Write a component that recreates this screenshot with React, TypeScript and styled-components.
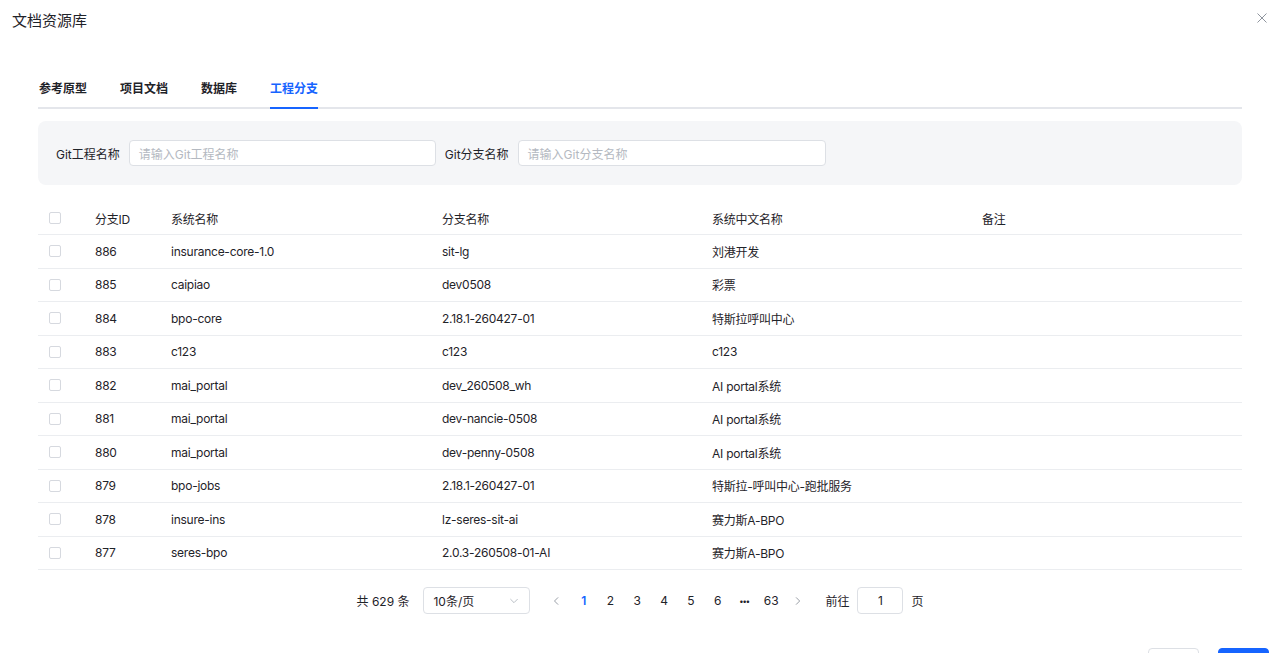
import styled, { createGlobalStyle } from "styled-components";

const GlobalStyle = createGlobalStyle`
  html, body {
    margin: 0;
    padding: 0;
    background: #fff;
    overflow: hidden;
  }
  body {
    font-family: Inter, "Noto Sans CJK SC", sans-serif;
    color: #1f2329;
  }
  * { box-sizing: border-box; }
`;

const Dialog = styled.div`
  width: 1280px;
  height: 653px;
  overflow: hidden;
  display: flex;
  flex-direction: column;

  & > * {
    flex-shrink: 0;
  }
`;

const Header = styled.header`
  display: flex;
  justify-content: space-between;
  align-items: flex-start;
  padding: 10px 12px 0 12px;
  height: 81px;
`;

const Title = styled.h2`
  margin: 0;
  font-size: 15px;
  font-weight: 400;
  line-height: 22px;
  color: #1f2329;
`;

const Close = styled.button`
  border: 0;
  background: none;
  padding: 0;
  width: 12px;
  height: 12px;
  margin-top: 2px;
  color: #8f959e;
  display: flex;
`;

const Body = styled.div`
  padding: 0 38px;
  display: flex;
  flex-direction: column;
`;

const Tabs = styled.nav`
  display: flex;
  gap: 33px;
  border-bottom: 2px solid #e4e6eb;
  padding-left: 1px;
  margin-bottom: 12px;
`;

const Tab = styled.div<{ $active?: boolean }>`
  font-size: 12px;
  font-weight: 600;
  line-height: 16px;
  padding-bottom: 10px;
  margin-bottom: -2px;
  color: ${(p) => (p.$active ? "#1664ff" : "#1f2329")};
  border-bottom: 2px solid ${(p) => (p.$active ? "#1664ff" : "transparent")};
`;

const Filter = styled.div`
  background: #f5f6f8;
  border-radius: 8px;
  height: 64px;
  padding: 0 18px;
  display: flex;
  align-items: center;
  gap: 9px;
`;

const FieldLabel = styled.label`
  font-size: 12px;
  color: #1f2329;
  white-space: nowrap;
`;

const TextInput = styled.div<{ $w: number }>`
  width: ${(p) => p.$w}px;
  height: 26px;
  background: #fff;
  border: 1px solid #dde0e5;
  border-radius: 4px;
  font-size: 12px;
  color: #b4b9c1;
  display: flex;
  align-items: center;
  padding: 0 9px;
`;

const Table = styled.div`
  margin-top: 17px;
  display: flex;
  flex-direction: column;
  letter-spacing: -0.25px;
`;

const cols = "57px 76px 271px 270px 270px 1fr";

const HeadRow = styled.div`
  display: grid;
  grid-template-columns: ${cols};
  align-items: center;
  height: 33px;
  border-bottom: 1px solid #ebedf0;
  font-size: 12px;
  color: #1f2329;
`;

const Row = styled.div`
  display: grid;
  grid-template-columns: ${cols};
  align-items: center;
  height: 33.5px;
  border-bottom: 1px solid #ebedf0;
  font-size: 12px;
  color: #1f2329;
`;

const Cell = styled.div`
  white-space: nowrap;
`;

const Check = styled.span`
  display: block;
  width: 12px;
  height: 12px;
  margin-left: 11px;
  border: 1px solid #d6d9df;
  border-radius: 2px;
  background: #fff;
`;

const Pager = styled.div`
  display: flex;
  align-items: center;
  justify-content: center;
  margin-top: 17px;
  font-size: 12px;
  color: #1f2329;
`;

const Total = styled.span`
  margin-right: 14px;
`;

const SizeSelect = styled.div`
  width: 107px;
  height: 27px;
  border: 1px solid #dde0e5;
  border-radius: 4px;
  display: flex;
  align-items: center;
  justify-content: space-between;
  padding: 0 10px 0 9px;
  margin-right: 13px;
  color: #1f2329;
`;

const SelectCaret = styled.span`
  color: #b4b9c1;
  display: flex;
`;

const PageBtn = styled.span<{ $active?: boolean }>`
  min-width: 26.8px;
  text-align: center;
  font-weight: ${(p) => (p.$active ? 600 : 400)};
  color: ${(p) => (p.$active ? "#1664ff" : "#1f2329")};
`;

const More = styled.span`
  min-width: 26.8px;
  text-align: center;
  font-size: 8px;
  letter-spacing: -0.5px;
  font-weight: 700;
`;

const Arrow = styled.span`
  width: 26.8px;
  display: flex;
  justify-content: center;
  color: #8f959e;
`;

const Jump = styled.span`
  margin-left: 14px;
  display: flex;
  align-items: center;
  gap: 8px;
`;

const JumpInput = styled.div`
  width: 46px;
  height: 27px;
  border: 1px solid #dde0e5;
  border-radius: 4px;
  display: flex;
  align-items: center;
  justify-content: center;
`;

const Footer = styled.div`
  display: flex;
  justify-content: flex-end;
  gap: 19px;
  padding-right: 11px;
  margin-top: 34px;
`;

const FootBtn = styled.button<{ $primary?: boolean }>`
  width: 51px;
  height: 28px;
  border-radius: 4px;
  border: 1px solid ${(p) => (p.$primary ? "#1664ff" : "#dde0e5")};
  background: ${(p) => (p.$primary ? "#1664ff" : "#fff")};
`;

const rows = [
  ["886", "insurance-core-1.0", "sit-lg", "刘港开发"],
  ["885", "caipiao", "dev0508", "彩票"],
  ["884", "bpo-core", "2.18.1-260427-01", "特斯拉呼叫中心"],
  ["883", "c123", "c123", "c123"],
  ["882", "mai_portal", "dev_260508_wh", "AI portal系统"],
  ["881", "mai_portal", "dev-nancie-0508", "AI portal系统"],
  ["880", "mai_portal", "dev-penny-0508", "AI portal系统"],
  ["879", "bpo-jobs", "2.18.1-260427-01", "特斯拉-呼叫中心-跑批服务"],
  ["878", "insure-ins", "lz-seres-sit-ai", "赛力斯A-BPO"],
  ["877", "seres-bpo", "2.0.3-260508-01-AI", "赛力斯A-BPO"],
];

const Chevron = ({ dir }: { dir: "left" | "right" | "down" }) => {
  const d =
    dir === "left" ? "M7 2 L3 6 L7 10" : dir === "right" ? "M4 2 L8 6 L4 10" : "M2 4 L6 8 L10 4";
  return (
    <svg width="10" height="10" viewBox="0 0 12 12" fill="none">
      <path d={d} stroke="currentColor" strokeWidth="1.1" strokeLinecap="round" strokeLinejoin="round" />
    </svg>
  );
};

export default function App() {
  return (
    <>
      <GlobalStyle />
      <Dialog>
        <Header>
          <Title>文档资源库</Title>
          <Close aria-label="关闭">
            <svg width="12" height="12" viewBox="0 0 12 12">
              <path d="M1.5 1.5 L10.5 10.5 M10.5 1.5 L1.5 10.5" stroke="#8f959e" strokeWidth="1" />
            </svg>
          </Close>
        </Header>
        <Body>
          <Tabs>
            <Tab>参考原型</Tab>
            <Tab>项目文档</Tab>
            <Tab>数据库</Tab>
            <Tab $active>工程分支</Tab>
          </Tabs>
          <Filter>
            <FieldLabel>Git工程名称</FieldLabel>
            <TextInput $w={307}>请输入Git工程名称</TextInput>
            <FieldLabel>Git分支名称</FieldLabel>
            <TextInput $w={308}>请输入Git分支名称</TextInput>
          </Filter>
          <Table>
            <HeadRow>
              <Check />
              <Cell>分支ID</Cell>
              <Cell>系统名称</Cell>
              <Cell>分支名称</Cell>
              <Cell>系统中文名称</Cell>
              <Cell>备注</Cell>
            </HeadRow>
            {rows.map((r) => (
              <Row key={r[0]}>
                <Check />
                <Cell>{r[0]}</Cell>
                <Cell>{r[1]}</Cell>
                <Cell>{r[2]}</Cell>
                <Cell>{r[3]}</Cell>
                <Cell />
              </Row>
            ))}
          </Table>
          <Pager>
            <Total>共 629 条</Total>
            <SizeSelect>
              <span>10条/页</span>
              <SelectCaret>
                <Chevron dir="down" />
              </SelectCaret>
            </SizeSelect>
            <Arrow>
              <Chevron dir="left" />
            </Arrow>
            <PageBtn $active>1</PageBtn>
            <PageBtn>2</PageBtn>
            <PageBtn>3</PageBtn>
            <PageBtn>4</PageBtn>
            <PageBtn>5</PageBtn>
            <PageBtn>6</PageBtn>
            <More>•••</More>
            <PageBtn>63</PageBtn>
            <Arrow>
              <Chevron dir="right" />
            </Arrow>
            <Jump>
              前往
              <JumpInput>1</JumpInput>
              页
            </Jump>
          </Pager>
        </Body>
        <Footer>
          <FootBtn />
          <FootBtn $primary />
        </Footer>
      </Dialog>
    </>
  );
}
